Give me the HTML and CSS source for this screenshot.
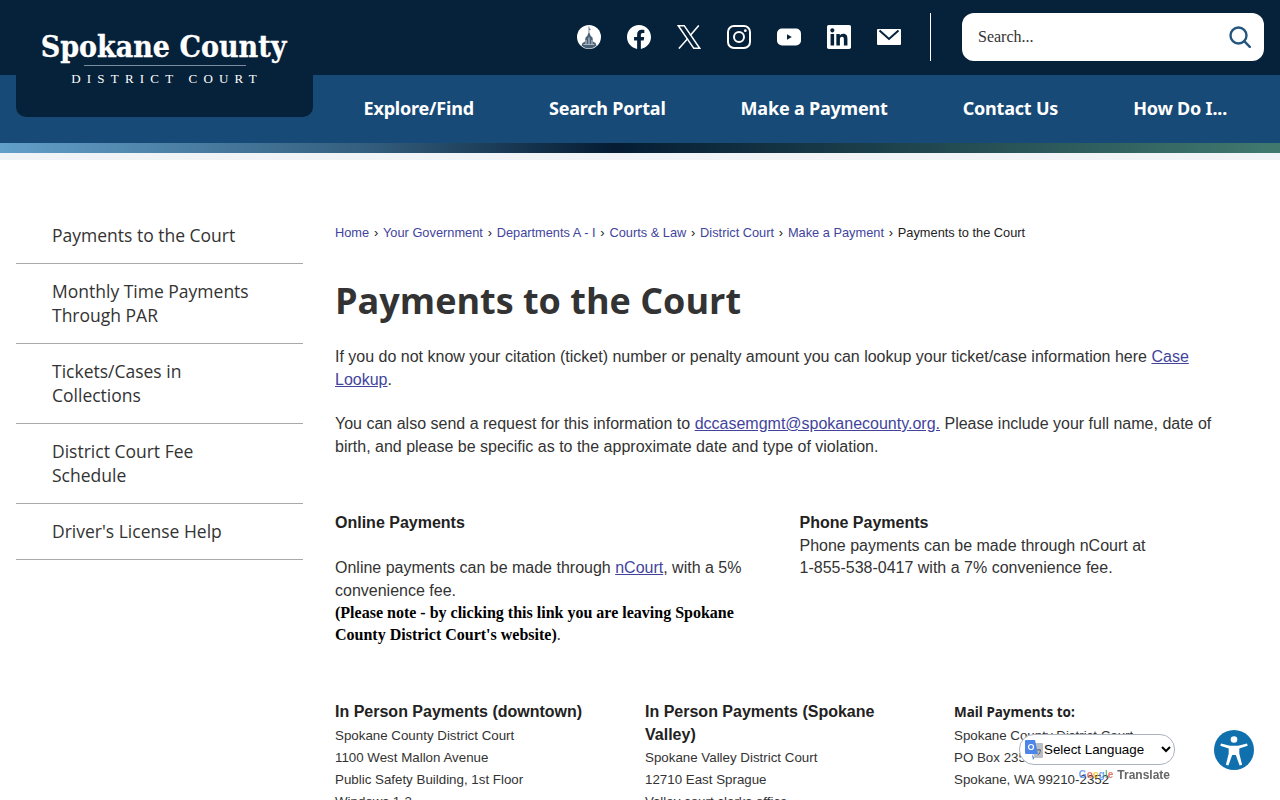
FILE: index.html
```html
<!DOCTYPE html>
<html lang="en">

<head>
    <meta charset="UTF-8">
    <meta name="viewport" content="width=device-width, initial-scale=1.0">
    <title>Payments to the Court | Spokane County</title>
    <link rel="stylesheet" href="styles.css">
</head>

<body>
    <header class="header">
        <div class="topbar">
            <div class="social">
                <a href="#" class="social-item">
                    <svg width="24" height="24" viewBox="0 0 24 24">
                        <circle cx="12" cy="12" r="12" fill="#fff" />
                        <path d="M11.6 1.5h.7v2l2 .8-2 .7v2.500l1.500 3.500 1.700 1.500.5 4 2.500 1.500 1 2.500c-2 1.800-4.900 3-7.500 3s-5.500-1.200-7.500-3l1-2.500 2.500-1.500.5-4 1.700-1.500 1.400-3.500z" fill="#4a6076" />
                        <path d="M8.500 15h1v4h-1zM11.500 12.500h1v6.500h-1zM14.500 15h1v4h-1zM6.500 19h11v.8h-11z" fill="#c9d2da" />
                    </svg>
                </a>
                <a href="#" class="social-item">
                    <svg width="24" height="24" viewBox="0 0 24 24">
                        <path fill="#fff" d="M24 12.073c0-6.627-5.373-12-12-12s-12 5.373-12 12c0 5.99 4.388 10.954 10.125 11.854v-8.385H7.078v-3.47h3.047V9.43c0-3.007 1.792-4.669 4.533-4.669 1.312 0 2.686.235 2.686.235v2.953H15.83c-1.491 0-1.956.925-1.956 1.874v2.25h3.328l-.532 3.47h-2.796v8.385C19.612 23.027 24 18.062 24 12.073z" />
                    </svg>
                </a>
                <a href="#" class="social-item">
                    <svg width="24" height="24" viewBox="0 0 24 24" fill="none" stroke="#fff" stroke-width="1.5">
                        <path d="M1.300.7h5.900l15.500 22.600h-5.900z" />
                        <path d="M21.800.4l-8.600 10M10.800 13.400L1.900 23.600" />
                    </svg>
                </a>
                <a href="#" class="social-item">
                    <svg width="24" height="24" viewBox="0 0 24 24" fill="none" stroke="#fff">
                        <rect x="1" y="1" width="22" height="22" rx="6" stroke-width="2" />
                        <circle cx="12" cy="12" r="5" stroke-width="2" />
                        <circle cx="18.3" cy="5.7" r="1.4" fill="#fff" stroke="none" />
                    </svg>
                </a>
                <a href="#" class="social-item">
                    <svg width="24" height="24" viewBox="0 0 24 24">
                        <rect y="3.5" width="24" height="17" rx="5" fill="#fff" />
                        <path d="M10 9.200v5.600l4.800-2.800z" fill="#06213a" />
                    </svg>
                </a>
                <a href="#" class="social-item">
                    <svg width="24" height="24" viewBox="0 0 24 24">
                        <path fill="#fff" d="M20.447 20.452h-3.554v-5.569c0-1.328-.027-3.037-1.852-3.037-1.853 0-2.136 1.445-2.136 2.939v5.667H9.351V9h3.414v1.561h.046c.477-.9 1.637-1.85 3.37-1.85 3.601 0 4.267 2.37 4.267 5.455v6.286zM5.337 7.433c-1.144 0-2.063-.926-2.063-2.065 0-1.138.92-2.063 2.063-2.063 1.14 0 2.064.925 2.064 2.063 0 1.139-.925 2.065-2.064 2.065zm1.782 13.019H3.555V9h3.564v11.452zM22.225 0H1.771C.792 0 0 .774 0 1.729v20.542C0 23.227.792 24 1.771 24h20.451C23.2 24 24 23.227 24 22.271V1.729C24 .774 23.2 0 22.222 0h.003z" />
                    </svg>
                </a>
                <a href="#" class="social-item">
                    <svg width="24" height="24" viewBox="0 0 24 24">
                        <rect y="4" width="24" height="16" rx="1" fill="#fff" />
                        <path d="M2.500 5.500l9.500 8.500 9.500-8.500" fill="none" stroke="#06213a" stroke-width="2" />
                    </svg>
                </a>
            </div>
            <div class="divider"></div>
            <form class="search">
                <span class="search-text">Search...</span>
                <svg width="22" height="22" viewBox="0 0 22 22" fill="none" stroke="#24567f" stroke-width="2.4">
                    <circle cx="9.5" cy="9.5" r="8" />
                    <path d="M15.200 15.200l5.600 5.600" stroke-linecap="round" />
                </svg>
            </form>
        </div>
        <nav class="nav">
            <a href="#">Explore/Find</a>
            <a href="#">Search Portal</a>
            <a href="#">Make a Payment</a>
            <a href="#">Contact Us</a>
            <a href="#">How Do I...</a>
        </nav>
        <div class="strip"></div>
        <div class="strip-light"></div>
        <a href="#" class="logo">
            <span class="logo-name">Spokane County</span>
            <span class="logo-rule"></span>
            <span class="logo-sub">DISTRICT COURT</span>
        </a>
    </header>

    <div class="page">
        <ul class="sidemenu">
            <li><a href="#">Payments to the Court</a></li>
            <li><a href="#">Monthly Time Payments Through PAR</a></li>
            <li><a href="#">Tickets/Cases in Collections</a></li>
            <li><a href="#">District Court Fee Schedule</a></li>
            <li><a href="#">Driver's License Help</a></li>
        </ul>

        <main class="content">
            <ol class="crumbs">
                <li><a href="#">Home</a></li>
                <li><a href="#">Your Government</a></li>
                <li><a href="#">Departments A - I</a></li>
                <li><a href="#">Courts &amp; Law</a></li>
                <li><a href="#">District Court</a></li>
                <li><a href="#">Make a Payment</a></li>
                <li>Payments to the Court</li>
            </ol>

            <h1>Payments to the Court</h1>

            <p class="intro">If you do not know your citation (ticket) number or penalty amount you can lookup your ticket/case information here <a href="#">Case Lookup</a>.</p>
            <p class="intro">You can also send a request for this information to <a href="#">dccasemgmt@spokanecounty.org.</a> Please include your full name, date of birth, and please be specific as to the approximate date and type of violation.</p>

            <div class="two-col">
                <div>
                    <p class="online-title"><strong>Online Payments</strong></p>
                    <p>Online payments can be made through <a href="#">nCourt</a>, with a 5% convenience fee.</p>
                    <p class="note"><strong>(Please note - by clicking this link you are leaving Spokane County District Court's website)</strong>.</p>
                </div>
                <div>
                    <p><strong>Phone Payments</strong></p>
                    <p class="phone-text">Phone payments can be made through nCourt at<br>1-855-538-0417 with a 7% convenience fee.</p>
                </div>
            </div>

            <div class="three-col">
                <div class="col-downtown">
                    <h3>In Person Payments (downtown)</h3>
                    <p>Spokane County District Court</p>
                    <p>1100 West Mallon Avenue</p>
                    <p>Public Safety Building, 1st Floor</p>
                    <p>Windows 1-3</p>
                </div>
                <div>
                    <h3>In Person Payments (Spokane Valley)</h3>
                    <p>Spokane Valley District Court</p>
                    <p>12710 East Sprague</p>
                    <p>Valley court clerks office</p>
                </div>
                <div>
                    <h4>Mail Payments to:</h4>
                    <p>Spokane County District Court</p>
                    <p>PO Box 2352</p>
                    <p>Spokane, WA 99210-2352</p>
                </div>
            </div>
        </main>
    </div>

    <div class="translate">
        <svg class="translate-icon" width="18" height="20" viewBox="0 0 18 20">
            <path d="M7 3h10a1 1 0 0 1 1 1v13a1 1 0 0 1-1 1H9z" fill="#b9bec4" />
            <path d="M1 0h9l3 14H1a1 1 0 0 1-1-1V1a1 1 0 0 1 1-1z" fill="#4d86e8" />
            <path d="M9 18l-1 2-1-6z" fill="#3367c0" />
            <circle cx="6" cy="7" r="2.5" fill="none" stroke="#fff" stroke-width="1.2" />
            <path d="M12 10h4M14 9v1M12.8 15c1.600-1 2.400-2.500 2.700-5" fill="none" stroke="#666" />
        </svg>
        <select class="translate-select">
            <option>Select Language</option>
        </select>
        <div class="translate-by">
            <span class="g-logo"><span class="g-blue">G</span><span class="g-red">o</span><span class="g-yellow">o</span><span class="g-blue">g</span><span class="g-green">l</span><span class="g-red">e</span></span>
            <span class="g-word">Translate</span>
        </div>
    </div>

    <a href="#" class="a11y">
        <svg width="40" height="40" viewBox="0 0 40 40">
            <circle cx="20" cy="20" r="20" fill="#1070ae" />
            <circle cx="20" cy="9.5" r="3.3" fill="#fff" />
            <path d="M7 13.500l9 2.300h8l9-2.300.7 2.300-8.400 2.700v5l2.800 11.200-2.500.8-3.800-10.500h-3.600l-3.800 10.500-2.500-.8 2.800-11.200v-5l-8.400-2.700z" fill="#fff" />
        </svg>
    </a>
</body>

</html>
```

FILE: styles.css
```css
* {
    margin: 0;
    padding: 0;
    box-sizing: border-box;
}

ul,
ol {
    list-style: none;
}

body {
    font-family: "Liberation Sans", Arial, sans-serif;
    font-size: 16px;
    line-height: 23px;
    color: #333;
    background: #fff;
}

a {
    color: #42449c;
}

/* header */
.header {
    position: relative;
}

.topbar {
    height: 75px;
    background: #06213a;
    display: flex;
    justify-content: flex-end;
    align-items: center;
    padding: 0 16px 2px 0;
}

.social {
    display: flex;
    gap: 26px;
}

.social-item {
    display: block;
    width: 24px;
    height: 24px;
}

.social-item svg {
    display: block;
}

.divider {
    width: 1px;
    height: 48px;
    background: #fff;
    margin: 0 31px 0 29px;
}

.search {
    width: 302px;
    height: 48px;
    background: #fff;
    border-radius: 12px;
    display: flex;
    align-items: center;
    justify-content: space-between;
    padding: 0 13px 0 16px;
}

.search-text {
    font-family: "Liberation Serif", serif;
    font-size: 16px;
    color: #333;
}

.nav {
    height: 68px;
    background: #174a76;
    display: flex;
    justify-content: flex-end;
    align-items: center;
    gap: 75px;
    padding: 0 53px 2px 0;
}

.nav a {
    font-family: "Noto Sans", sans-serif;
    font-size: 18px;
    font-weight: 700;
    color: #fff;
    text-decoration: none;
    letter-spacing: -0.2px;
}

.strip {
    height: 10px;
    background: linear-gradient(to right, #629fc9 0%, #35607f 28%, #051c33 48%, #1b3f4a 68%, #41796f 100%);
}

.strip-light {
    height: 7px;
    background: #f1f4f6;
}

.logo {
    position: absolute;
    left: 16px;
    top: 0;
    width: 297px;
    height: 117px;
    background: #06213a;
    border-radius: 0 0 10px 10px;
    color: #fff;
    text-decoration: none;
    text-align: center;
    padding-top: 28px;
}

.logo-name {
    display: block;
    padding-right: 2px;
    font-family: "DejaVu Serif Condensed", "DejaVu Serif", serif;
    font-size: 30px;
    line-height: 37px;
    font-weight: 700;
    white-space: nowrap;
    -webkit-text-stroke: 0.3px #fff;
}

.logo-rule {
    display: block;
    width: 162px;
    height: 1px;
    margin: 0 auto;
    background: #7c8c9c;
}

.logo-sub {
    display: block;
    margin-top: 3px;
    padding-left: 5px;
    font-family: "Liberation Serif", serif;
    font-size: 13px;
    line-height: 20px;
    letter-spacing: 6.2px;
}

/* page */
.page {
    display: flex;
    gap: 32px;
    padding: 48px 16px 0;
}

.sidemenu {
    width: 287px;
    flex: none;
}

.sidemenu li {
    border-bottom: 1px solid #a9a9a9;
    padding: 15px 36px;
}

.sidemenu li:last-child {
    padding-bottom: 16px;
}

.sidemenu a {
    font-family: "Open Sans", sans-serif;
    font-size: 17.5px;
    line-height: 24.5px;
    color: #333;
    text-decoration: none;
    display: block;
}

.content {
    flex: 1;
    min-width: 0;
    padding-right: 40px;
}

.crumbs {
    display: flex;
    padding-top: 15px;
    font-size: 12.8px;
    line-height: 20px;
    color: #222;
    margin-bottom: 36px;
}

.crumbs a {
    text-decoration: none;
}

.crumbs li + li::before {
    content: "›";
    margin: 0 4.8px;
}

h1 {
    font-family: "Open Sans", sans-serif;
    font-size: 36px;
    line-height: 44px;
    font-weight: 700;
    color: #333;
    margin-bottom: 22px;
}

.intro {
    margin-bottom: 21px;
}

.two-col {
    display: grid;
    grid-template-columns: 464.5px 1fr;
    margin-top: 53px;
}

.two-col > div {
    padding-right: 40px;
}

.two-col strong {
    color: #222;
}

.online-title {
    margin-bottom: 22px;
}

.note {
    font-family: "Liberation Serif", serif;
    line-height: 22px;
}

.note strong {
    color: #000;
}

.phone-text {
    line-height: 22px;
    padding-top: 0.5px;
}

.three-col {
    display: grid;
    grid-template-columns: 310px 309px 1fr;
    margin-top: 54px;
}

.three-col > div {
    padding-right: 40px;
}

.three-col h3 {
    font-size: 16px;
    line-height: 23px;
    margin-bottom: 0.5px;
    color: #222;
}

.col-downtown h3 {
    margin-bottom: 1.5px;
}

.three-col h4 {
    font-family: "Noto Sans", sans-serif;
    font-size: 13.5px;
    line-height: 24px;
    margin-bottom: 0.5px;
    color: #222;
}

.three-col p {
    font-size: 13.33px;
    line-height: 22px;
}

/* floating widgets */
.translate {
    position: fixed;
    left: 1019px;
    top: 734px;
    width: 156px;
}

.translate-select {
    display: block;
    width: 156px;
    height: 31px;
    padding-left: 20px;
    font-family: "Liberation Sans", Arial, sans-serif;
    font-size: 13.33px;
    color: #000;
    background: #fff;
    border: 1px solid #aab2c0;
    border-radius: 15px;
}

.translate-icon {
    position: absolute;
    left: 6px;
    top: 6px;
    z-index: 1;
}

.translate-by {
    display: flex;
    gap: 4px;
    justify-content: flex-end;
    padding: 1px 5px 0 0;
    line-height: 18px;
}

.g-logo {
    font-size: 10px;
    font-weight: 700;
    opacity: 0.75;
}

.g-word {
    font-size: 12px;
    font-weight: 700;
    color: #666;
}

.g-blue {
    color: #4285f4;
}

.g-red {
    color: #ea4335;
}

.g-yellow {
    color: #fbbc05;
}

.g-green {
    color: #34a853;
}

.a11y {
    position: fixed;
    left: 1214px;
    top: 730px;
    width: 40px;
    height: 40px;
}

.a11y svg {
    display: block;
}
```
